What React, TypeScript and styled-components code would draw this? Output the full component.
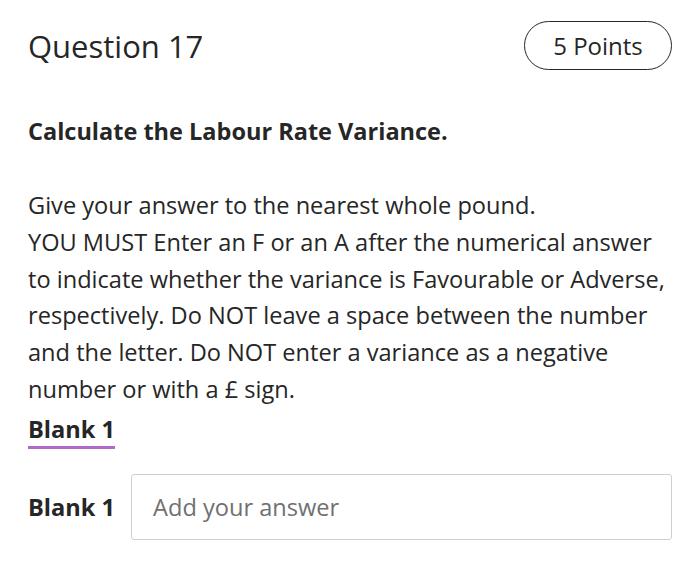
import React from 'react';
import styled, { createGlobalStyle } from 'styled-components';

const GlobalStyle = createGlobalStyle`
  html, body {
    margin: 0;
    padding: 0;
    background: #ffffff;
  }
  body {
    font-family: "Open Sans", "Noto Sans", sans-serif;
    color: #262626;
  }
`;

const Page = styled.div`
  width: 700px;
  box-sizing: border-box;
  padding: 21px 28px 0 28px;
`;

const Header = styled.div`
  display: flex;
  justify-content: space-between;
  align-items: center;
`;

const Title = styled.h1`
  margin: 0;
  font-size: 31px;
  font-weight: 400;
`;

const PointsPill = styled.div`
  display: flex;
  align-items: center;
  justify-content: center;
  width: 148px;
  height: 49px;
  box-sizing: border-box;
  border: 1.5px solid #262626;
  border-radius: 25px;
  font-size: 24px;
`;

const Prompt = styled.p`
  margin: 45px 0 0 0;
  font-size: 23.5px;
  line-height: 32px;
  font-weight: 700;
`;

const Instructions = styled.p`
  margin: 40px 0 0 0;
  font-size: 23.6px;
  line-height: 36.8px;
`;

const BlankTab = styled.div`
  display: inline-block;
  margin-top: 5px;
  font-size: 23.6px;
  line-height: 32px;
  font-weight: 700;
  padding-bottom: 1px;
  border-bottom: 3px solid #b26ac4;
`;

const AnswerRow = styled.div`
  display: flex;
  align-items: center;
  gap: 16px;
  margin-top: 25px;
`;

const AnswerLabel = styled.label`
  font-size: 23.6px;
  font-weight: 700;
`;

const AnswerInput = styled.input`
  flex: 1;
  height: 66px;
  box-sizing: border-box;
  border: 1.5px solid #cfcfcf;
  border-radius: 3px;
  padding: 0 21px;
  font-family: "Open Sans", "Noto Sans", sans-serif;
  font-size: 23.6px;
  color: #262626;
  outline: none;

  &::placeholder {
    color: #707070;
  }
`;

export default function App() {
  return (
    <>
      <GlobalStyle />
      <Page>
        <Header>
          <Title>Question 17</Title>
          <PointsPill>5 Points</PointsPill>
        </Header>
        <Prompt>Calculate the Labour Rate Variance.</Prompt>
        <Instructions>
          Give your answer to the nearest whole pound.
          <br />
          YOU MUST Enter an F or an A after the numerical answer to indicate whether the
          variance is Favourable or Adverse, respectively. Do NOT leave a space between the
          number and the letter. Do NOT enter a variance as a negative number or with a £ sign.
        </Instructions>
        <BlankTab>Blank 1</BlankTab>
        <AnswerRow>
          <AnswerLabel htmlFor="blank-1">Blank 1</AnswerLabel>
          <AnswerInput id="blank-1" placeholder="Add your answer" />
        </AnswerRow>
      </Page>
    </>
  );
}
